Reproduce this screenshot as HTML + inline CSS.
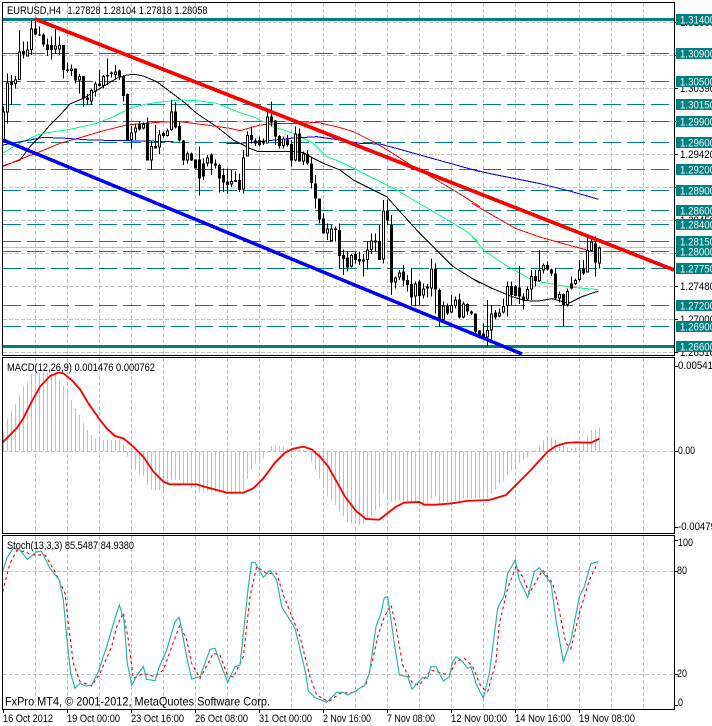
<!DOCTYPE html>
<html><head><meta charset="utf-8"><style>
html,body{margin:0;padding:0;background:#fff;width:712px;height:726px;overflow:hidden}
svg{display:block}
text{font-family:"Liberation Sans",sans-serif;font-size:10.6px;fill:#000}
.t{fill:#f6f6f6}
.w{fill:none;stroke:#000;stroke-width:3;shape-rendering:crispEdges}
.b{fill:none;stroke:#000;stroke-width:9;shape-rendering:crispEdges}
.i{fill:none;stroke:#fff;stroke-width:3;shape-rendering:crispEdges}
.k{fill:none;stroke:#000;stroke-width:3;shape-rendering:crispEdges}
.g{fill:none;stroke:#00ff7f;stroke-width:3;shape-rendering:crispEdges}
.r{fill:none;stroke:#f00;stroke-width:3;shape-rendering:crispEdges}
.u{fill:none;stroke:#00f;stroke-width:3;shape-rendering:crispEdges}
.s{fill:none;stroke:#20b2aa;stroke-width:3.4}
.d{fill:none;stroke:#f00;stroke-width:3.4;stroke-dasharray:9 9}
.m{fill:none;stroke:#f00;stroke-width:5.6}
</style></head><body>
<svg width="712" height="726" viewBox="0 0 712 726" xmlns="http://www.w3.org/2000/svg">
<rect width="712" height="726" fill="#fff"/>
<!-- vertical grid -->
<path shape-rendering="crispEdges" fill="none" stroke="#c0c0c0" stroke-dasharray="4 2" d="M35.5 3V355M67.5 3V355M99.5 3V355M131.5 3V355M163.5 3V355M195.5 3V355M227.5 3V355M259.5 3V355M291.5 3V355M323.5 3V355M355.5 3V355M387.5 3V355M419.5 3V355M451.5 3V355M483.5 3V355M515.5 3V355M547.5 3V355M579.5 3V355M611.5 3V355M643.5 3V355M35.5 358V533M67.5 358V533M99.5 358V533M131.5 358V533M163.5 358V533M195.5 358V533M227.5 358V533M259.5 358V533M291.5 358V533M323.5 358V533M355.5 358V533M387.5 358V533M419.5 358V533M451.5 358V533M483.5 358V533M515.5 358V533M547.5 358V533M579.5 358V533M611.5 358V533M643.5 358V533M35.5 536V709M67.5 536V709M99.5 536V709M131.5 536V709M163.5 536V709M195.5 536V709M227.5 536V709M259.5 536V709M291.5 536V709M323.5 536V709M355.5 536V709M387.5 536V709M419.5 536V709M451.5 536V709M483.5 536V709M515.5 536V709M547.5 536V709M579.5 536V709M611.5 536V709M643.5 536V709"/>
<!-- horizontal grid -->
<path shape-rendering="crispEdges" fill="none" stroke="#c0c0c0" stroke-dasharray="4 2" d="M3 22.5H674M3 55.5H674M3 88.5H674M3 121.5H674M3 154.5H674M3 187.5H674M3 220.5H674M3 253.5H674M3 286.5H674M3 319.5H674M3 352.5H674M3 451.5H674M3 571.5H674M3 674.5H674"/>
<!-- price line -->
<path shape-rendering="crispEdges" stroke="#c0c0c0" d="M3 247.5H674"/>
<!-- teal levels -->
<path shape-rendering="crispEdges" fill="none" stroke="#008080" stroke-dasharray="18 6" d="M3 53.5H674M3 81.5H674M3 104.5H674M3 121.5H674M3 142.5H674M3 169.5H674M3 190.5H674M3 210.5H674M3 224.5H674M3 241.5H674M3 251.5H674M3 268.5H674M3 305.5H674M3 326.5H674"/>
<rect x="3" y="18" width="671" height="3" fill="#008080"/>
<rect x="3" y="345" width="671" height="3" fill="#008080"/>
<!-- moving averages -->
<g transform="scale(.33333)">
<path class="k" d="M8 498L60 480L90 440L120 410L150 375L180 345L210 312L250 295L300 265L350 235L380 225L405 223L430 228L470 245L510 275L550 305L590 340L650 380L700 420L720 430"/>
<path class="g" d="M8 460L40 440L80 420L110 405L160 395L210 388L290 370L340 350L390 325L440 312L490 305L540 300L590 302L650 310L700 330L720 338"/>
<path class="r" d="M8 500L60 478L120 455L180 430L250 410L300 395L380 375L470 367L540 365L620 375L690 385L720 392"/>
<path class="u" d="M8 435L90 420L130 412L200 415L270 420L380 422L520 425M680 430L720 430"/>
</g>
<g transform="translate(240 0) scale(.33333)">
<path class="k" d="M0 430L30 445L55 455L165 455L190 458L220 475L250 490L300 510L340 540"/>
<path class="g" d="M0 338L40 350L100 380L160 400L220 430L260 470L300 485L350 510L410 540"/>
<path class="r" d="M0 392L60 375L120 370L180 370L230 367L290 380L340 395L400 425L450 455L520 500L590 540"/>
<path class="u" d="M0 430L60 425L150 415L230 410L300 420L360 430L420 432L480 448L540 465L630 490L720 515"/>
</g>
<g transform="translate(240 180) scale(.33333)">
<path class="k" d="M340 0L400 30L440 50L480 95L530 150L580 200L640 260L720 310"/>
<path class="g" d="M410 0L470 30L520 60L580 95L640 130L680 155L715 185"/>
<path class="r" d="M590 0L640 30L720 80"/>
</g>
<g transform="translate(472 0) scale(.33333)"><path class="u" d="M0 508L50 520L150 540"/></g>
<g transform="translate(472 180) scale(.33333)">
<path class="k" d="M0 295L60 325L120 350L160 362L200 363L240 356L290 370L330 350L380 333"/>
<path class="g" d="M0 170L40 215L100 255L170 295L200 305L245 313L300 322L380 329"/>
<path class="r" d="M0 70L60 105L130 145L200 170L270 190L345 210"/>
<path class="u" d="M150 0L200 10L300 35L380 58"/>
</g>
<!-- candles -->
<g transform="scale(.33333)">
<path class="w" d="M10.5 320V420M22.5 220V370M34.5 225V315M46.5 228V265M58.5 90V240M70.5 125V175M82.5 125V170M94.5 60V165M106.5 55V105M118.5 80V108M130.5 100V140M142.5 115V168M154.5 110V178M166.5 85V162M178.5 110V165M190.5 135V235M202.5 188V218M214.5 193V228M226.5 205V250M238.5 222V280M250.5 228V320M262.5 282V315M274.5 265V315M286.5 245V290M298.5 210V260M310.5 225V265M322.5 175V255M334.5 215V232M346.5 195V235M358.5 208V240M370.5 225V305M382.5 280V422M394.5 378V445M406.5 370V420M418.5 365V392M430.5 368V388M442.5 352V482M454.5 425V510M466.5 375V445M478.5 390V462M490.5 395V412M502.5 385V410M514.5 300V392M526.5 308V385M538.5 365V425M550.5 420V495M562.5 455V490M574.5 458V483M586.5 478V505M598.5 440V587M610.5 475V540M622.5 465V500M634.5 460V525M646.5 478V505M658.5 490V578M670.5 505V576M682.5 505V582M694.5 510V561M706.5 515V546M718.5 520V576"/>
<path class="b" d="M10.5 335V420M22.5 248V338M34.5 245V255M46.5 238V252M58.5 155V240M70.5 153V163M82.5 148V170M94.5 85V150M106.5 85V103M118.5 103V106M130.5 103V133M142.5 133V150M154.5 135V150M166.5 137V148M178.5 135V148M190.5 135V210M202.5 208V213M214.5 205V213M226.5 205V242M238.5 228V242M250.5 228V295M262.5 292V300M274.5 270V305M286.5 250V275M298.5 250V258M310.5 228V258M322.5 225V230M334.5 218V222M346.5 215V225M358.5 212V230M370.5 228V288M382.5 282V422M394.5 398V420M406.5 382V398M418.5 372V388M430.5 372V386M442.5 368V482M454.5 438V482M466.5 438V445M478.5 403V442M490.5 399V408M502.5 392V408M514.5 335V390M526.5 335V382M538.5 378V422M550.5 422V482M562.5 460V482M574.5 461V482M586.5 478V505M598.5 478V535M610.5 490V530M622.5 472V490M634.5 463V490M646.5 490V497M658.5 495V535M670.5 525V548M682.5 545V555M694.5 543V554M706.5 540V546M718.5 540V570"/>
<path class="i" d="M10.5 338V417M22.5 251V335M46.5 241V249M58.5 158V237M82.5 151V167M94.5 88V147M166.5 140V145M178.5 138V145M214.5 208V210M238.5 231V239M274.5 273V302M286.5 253V272M310.5 231V255M346.5 218V222M394.5 401V417M406.5 385V395M430.5 375V383M454.5 441V479M478.5 406V439M502.5 395V405M514.5 338V387M562.5 463V479M622.5 475V487M694.5 546V551"/>
</g>
<g transform="translate(240 0) scale(.33333)">
<path class="w" d="M10.5 450V580M22.5 395V470M34.5 380V430M46.5 415V438M58.5 410V440M70.5 415V435M82.5 335V430M94.5 305V380M106.5 360V435M118.5 405V445M130.5 410V445M142.5 405V440M154.5 420V500M166.5 380V485M178.5 385V485M190.5 455V495M202.5 450V495"/>
<path class="b" d="M10.5 472V568M22.5 405V470M34.5 405V420M46.5 422V430M58.5 420V435M70.5 422V430M82.5 350V430M94.5 350V368M106.5 362V410M118.5 408V438M130.5 415V438M142.5 418V435M154.5 432V482M166.5 400V482M178.5 400V485M190.5 460V485M202.5 462V490"/>
<path class="i" d="M10.5 475V565M22.5 408V467M82.5 353V427M130.5 418V435M166.5 403V479M190.5 463V482"/>
</g>
<g transform="translate(240 180) scale(.33333)">
<path class="w" d="M214.5 -70V25M226.5 -15V85M238.5 55V130M250.5 100V160M262.5 130V180M274.5 135V185M286.5 140V185M298.5 130V265M310.5 208V285M322.5 215V275M334.5 222V262M346.5 215V250M358.5 215V255M370.5 222V290M382.5 185V268M394.5 160V222M406.5 160V215M418.5 135V225M430.5 60V250M442.5 58V135M454.5 105V345M466.5 290V325M478.5 270V300M490.5 255V320M502.5 285V335M514.5 265V375M526.5 305V380M538.5 300V375M550.5 310V355M562.5 312V353M574.5 235V350M586.5 250V400M598.5 325V440M610.5 365V420M622.5 370V405M634.5 345V400M646.5 350V385M658.5 340V415M670.5 365V415M682.5 370V405M694.5 392V405M706.5 400V460"/>
<path class="b" d="M214.5 -50V9M226.5 10V55M238.5 55V118M250.5 115V160M262.5 145V160M274.5 145V183M286.5 145V150M298.5 150V228M310.5 225V237M322.5 233V262M334.5 225V260M346.5 222V240M358.5 237V245M370.5 238V245M382.5 208V240M394.5 182V210M406.5 182V188M418.5 183V240M430.5 92V238M442.5 92V122M454.5 135V308M466.5 292V308M478.5 278V293M490.5 275V302M502.5 300V315M514.5 312V352M526.5 310V350M538.5 305V348M550.5 325V347M562.5 320V325M574.5 265V325M586.5 265V328M598.5 330V420M610.5 377V420M622.5 378V400M634.5 375V398M646.5 358V378M658.5 358V412M670.5 370V412M682.5 372V395M694.5 395V401M706.5 400V455"/>
<path class="i" d="M262.5 148V157M274.5 148V180M334.5 228V257M382.5 211V237M394.5 185V207M430.5 95V235M466.5 295V305M478.5 281V290M526.5 313V347M550.5 328V344M574.5 268V322M610.5 380V417M634.5 378V395M646.5 361V375M670.5 373V409"/>
</g>
<g transform="translate(472 180) scale(.33333)">
<path class="w" d="M22.5 450V468M34.5 430V480M46.5 360V500M58.5 375V480M70.5 390V418M82.5 385V412M94.5 355V400M106.5 305V410M118.5 305V375M130.5 315V350M142.5 258V372M154.5 340V388M166.5 320V360M178.5 270V360M190.5 270V320M202.5 210V305M214.5 250V280M226.5 245V272M238.5 265V288M250.5 265V360M262.5 335V368M274.5 340V438M286.5 325V380M298.5 290V328M310.5 295V315M322.5 240V305M334.5 240V285M346.5 172V278M358.5 178V215M370.5 170V290M382.5 200V265"/>
<path class="b" d="M22.5 452V465M34.5 460V470M46.5 450V472M58.5 400V452M70.5 398V412M82.5 397V410M94.5 378V398M106.5 318V378M118.5 318V345M130.5 320V348M142.5 323V350M154.5 350V360M166.5 327V358M178.5 288V328M190.5 288V303M202.5 270V303M214.5 255V272M226.5 255V268M238.5 268V280M250.5 280V355M262.5 342V355M274.5 342V375M286.5 333V375M298.5 310V325M310.5 300V312M322.5 268V300M334.5 265V280M346.5 210V278M358.5 185V213M370.5 190V248M382.5 203V250"/>
<path class="i" d="M46.5 453V469M58.5 403V449M82.5 400V407M94.5 381V395M106.5 321V375M166.5 330V355M178.5 291V325M202.5 273V300M214.5 258V269M262.5 345V352M286.5 336V372M310.5 303V309M322.5 271V297M346.5 213V275M358.5 188V210M382.5 206V247"/>
</g>
<!-- trend lines -->
<path shape-rendering="crispEdges" fill="none" stroke="#f00" stroke-width="3.7" d="M35 19L674 270"/>
<path shape-rendering="crispEdges" fill="none" stroke="#00f" stroke-width="3.5" d="M3 140L522 354"/>
<!-- MACD histogram -->
<g transform="translate(0 350) scale(.33333)">
<path fill="none" stroke="#c0c0c0" stroke-width="3" shape-rendering="crispEdges" d="M10.5 304V243M22.5 304V207M34.5 304V182M46.5 304V162M58.5 304V135M70.5 304V110M82.5 304V97M94.5 304V72M106.5 304V72M118.5 304V70M130.5 304V68M142.5 304V68M154.5 304V70M166.5 304V72M178.5 304V90M190.5 304V108M202.5 304V125M214.5 304V150M226.5 304V175M238.5 304V195M250.5 304V218M262.5 304V240M274.5 304V255M286.5 304V265M298.5 304V270M310.5 304V270M322.5 304V270M334.5 304V270M346.5 304V270M358.5 304V270M370.5 304V285M382.5 304V320M394.5 304V350M406.5 304V360M418.5 304V370M430.5 304V378M442.5 304V405M454.5 304V418M466.5 304V422M478.5 304V420M490.5 304V420M502.5 304V405M514.5 304V390M526.5 304V388M538.5 304V390M550.5 304V405M562.5 304V405M574.5 304V415M586.5 304V415M598.5 304V428M610.5 304V428M622.5 304V425M634.5 304V425M646.5 304V425M658.5 304V428M670.5 304V425M682.5 304V432M694.5 304V432M706.5 304V430M718.5 304V428M730.5 304V420M742.5 304V385M754.5 304V360M766.5 304V340M778.5 304V335M790.5 304V325M802.5 304V307M814.5 304V288M826.5 304V285M838.5 304V288M850.5 304V290M862.5 304V295M874.5 304V300M886.5 304V298M898.5 304V298M910.5 304V298M922.5 304V305M934.5 304V335M946.5 304V360M958.5 304V385M970.5 304V410M982.5 304V440M994.5 304V450M1006.5 304V465M1018.5 304V485M1030.5 304V500M1042.5 304V518M1054.5 304V520M1066.5 304V508"/>
<path class="m" d="M8 277L50 235L70 205L95 155L120 110L150 78L175 68L190 70L215 90L240 118L265 160L300 210L320 235L345 258L370 265L400 290L430 320L460 365L490 395L510 403L590 403L620 412L680 428L730 428L760 415L790 385L825 338L855 308L880 296L910 290L935 298L960 320L985 350L1010 395L1035 440L1068 483"/>
</g>
<g transform="translate(356 350) scale(.33333)">
<path fill="none" stroke="#c0c0c0" stroke-width="3" shape-rendering="crispEdges" d="M10.5 304V525M22.5 304V522M34.5 304V510M46.5 304V500M58.5 304V480M70.5 304V470M82.5 304V430M94.5 304V445M106.5 304V455M118.5 304V455M130.5 304V450M142.5 304V460M154.5 304V455M166.5 304V455M178.5 304V455M190.5 304V465M202.5 304V470M214.5 304V460M226.5 304V445M238.5 304V440M250.5 304V462M262.5 304V458M274.5 304V458M286.5 304V460M298.5 304V452M310.5 304V455M322.5 304V445M334.5 304V445M346.5 304V445M358.5 304V445M370.5 304V445M382.5 304V435M394.5 304V445M406.5 304V430M418.5 304V418M430.5 304V400M442.5 304V395M454.5 304V375M466.5 304V360M478.5 304V352M490.5 304V338M502.5 304V330M514.5 304V322M526.5 304V303M538.5 304V300M550.5 304V285M562.5 304V272M574.5 304V268M586.5 304V262M598.5 304V270M610.5 304V278M622.5 304V288M634.5 304V292M646.5 304V295M658.5 304V293M670.5 304V290M682.5 304V278M694.5 304V258M706.5 304V240M718.5 304V240M730.5 304V232"/>
<path class="m" d="M0 483L30 507L70 509L120 470L145 458L190 456L205 464L240 464L290 460L330 453L400 450L450 435L480 405L520 365L575 305L600 288L630 279L660 277L705 278L730 266"/>
</g>
<!-- Stochastic -->
<g transform="translate(0 530) scale(.33333)">
<path class="d" d="M8 185L30 100L50 62L75 65L95 75L135 75L165 125L195 190L205 280L220 400L240 455L275 468L300 430L335 350L350 290L370 248L385 330L400 445L430 430L465 440L490 420L530 310L540 285L560 330L575 400L600 445L640 370L660 375L680 430L700 442L730 380L750 200L770 110L800 130L830 130L850 195L900 320L930 440L950 495L985 515L1020 490L1068 487"/>
<path class="s" d="M8 125L20 85L40 55L60 60L82 88L110 65L125 65L150 115L178 150L190 210L200 320L212 430L225 475L240 460L258 468L275 465L295 425L320 350L345 265L358 225L372 270L382 400L395 465L415 430L430 410L440 448L465 452L478 410L500 360L525 275L538 262L560 380L575 447L600 440L630 358L645 355L665 410L683 457L705 410L720 405L745 170L755 97L765 97L790 142L810 120L830 150L845 230L885 295L915 420L925 483L945 503L980 517L1010 487L1030 487L1042 495L1068 483"/>
</g>
<g transform="translate(356 530) scale(.33333)">
<path class="d" d="M0 483L30 462L50 390L65 320L85 260L105 225L120 290L140 405L170 460L190 465L225 420L260 430L280 435L300 395L325 385L350 410L375 470L395 485L420 395L430 280L455 175L480 110L500 140L520 190L560 120L590 160L605 220L630 340L645 355L670 250L700 150L725 100"/>
<path class="s" d="M0 483L15 472L25 468L40 430L60 290L75 250L85 203L95 200L115 340L130 435L155 440L168 478L200 442L215 445L225 410L240 410L262 453L280 440L290 395L300 380L315 390L335 415L345 410L360 460L382 505L400 430L425 235L445 195L455 130L478 90L490 150L515 202L535 125L550 113L585 160L600 270L622 395L645 330L670 200L685 170L705 100L728 95"/>
</g>
<!-- borders -->
<path shape-rendering="crispEdges" fill="none" stroke="#000" d="M2.5 2.5H674.5V355.5H2.5ZM2.5 357.5H674.5V533.5H2.5ZM2.5 535.5H674.5V709.5H2.5Z"/>
<!-- ticks -->
<path shape-rendering="crispEdges" fill="none" stroke="#000" d="M675 22.5h3M675 55.5h3M675 88.5h3M675 121.5h3M675 154.5h3M675 187.5h3M675 220.5h3M675 253.5h3M675 286.5h3M675 319.5h3M675 352.5h3M675 366.5h3M675 451.5h3M675 527.5h3M675 540.5h3M675 571.5h3M675 674.5h3M675 705.5h3M3.5 710v3M67.5 710v3M131.5 710v3M195.5 710v3M259.5 710v3M323.5 710v3M387.5 710v3M451.5 710v3M515.5 710v3M579.5 710v3"/>
<!-- plain axis labels -->
<text x="680" y="26" textLength="35" lengthAdjust="spacingAndGlyphs">1.31360</text>
<text x="680" y="59" textLength="35" lengthAdjust="spacingAndGlyphs">1.30875</text>
<text x="680" y="92" textLength="35" lengthAdjust="spacingAndGlyphs">1.30390</text>
<text x="680" y="158" textLength="35" lengthAdjust="spacingAndGlyphs">1.29420</text>
<text x="680" y="224" textLength="35" lengthAdjust="spacingAndGlyphs">1.28450</text>
<text x="680" y="290" textLength="35" lengthAdjust="spacingAndGlyphs">1.27480</text>
<text x="680" y="323" textLength="35" lengthAdjust="spacingAndGlyphs">1.27000</text>
<text x="680" y="356" textLength="35" lengthAdjust="spacingAndGlyphs">1.26510</text>
<!-- teal boxes -->
<path fill="#008080" d="M676 14h36v11h-36zM676 48h36v11h-36zM676 76h36v11h-36zM676 99h36v11h-36zM676 116h36v11h-36zM676 137h36v11h-36zM676 164h36v11h-36zM676 185h36v11h-36zM676 205h36v11h-36zM676 219h36v11h-36zM676 236h36v11h-36zM676 246h36v11h-36zM676 263h36v11h-36zM676 300h36v11h-36zM676 321h36v11h-36zM676 341h36v11h-36z"/>
<text class="t" x="680" y="23.5" textLength="35" lengthAdjust="spacingAndGlyphs">1.31400</text>
<text class="t" x="680" y="57.5" textLength="35" lengthAdjust="spacingAndGlyphs">1.30900</text>
<text class="t" x="680" y="85.5" textLength="35" lengthAdjust="spacingAndGlyphs">1.30500</text>
<text class="t" x="680" y="108.5" textLength="35" lengthAdjust="spacingAndGlyphs">1.30150</text>
<text class="t" x="680" y="125.5" textLength="35" lengthAdjust="spacingAndGlyphs">1.29900</text>
<text class="t" x="680" y="146.5" textLength="35" lengthAdjust="spacingAndGlyphs">1.29600</text>
<text class="t" x="680" y="173.5" textLength="35" lengthAdjust="spacingAndGlyphs">1.29200</text>
<text class="t" x="680" y="194.5" textLength="35" lengthAdjust="spacingAndGlyphs">1.28900</text>
<text class="t" x="680" y="214.5" textLength="35" lengthAdjust="spacingAndGlyphs">1.28600</text>
<text class="t" x="680" y="228.5" textLength="35" lengthAdjust="spacingAndGlyphs">1.28400</text>
<text class="t" x="680" y="245.5" textLength="35" lengthAdjust="spacingAndGlyphs">1.28150</text>
<text class="t" x="680" y="255.5" textLength="35" lengthAdjust="spacingAndGlyphs">1.28000</text>
<text class="t" x="680" y="272.5" textLength="35" lengthAdjust="spacingAndGlyphs">1.27750</text>
<text class="t" x="680" y="309.5" textLength="35" lengthAdjust="spacingAndGlyphs">1.27200</text>
<text class="t" x="680" y="330.5" textLength="35" lengthAdjust="spacingAndGlyphs">1.26900</text>
<text class="t" x="680" y="350.5" textLength="35" lengthAdjust="spacingAndGlyphs">1.26600</text>
<!-- indicator axis -->
<text x="678" y="369" textLength="35" lengthAdjust="spacingAndGlyphs">0.00541</text>
<text x="678" y="454" textLength="17" lengthAdjust="spacingAndGlyphs">0.00</text>
<text x="678" y="530" textLength="38" lengthAdjust="spacingAndGlyphs">-0.00479</text>
<text x="678" y="546" textLength="15" lengthAdjust="spacingAndGlyphs">100</text>
<text x="677" y="574" textLength="10" lengthAdjust="spacingAndGlyphs">80</text>
<text x="677" y="677" textLength="10" lengthAdjust="spacingAndGlyphs">20</text>
<text x="678" y="706" textLength="5" lengthAdjust="spacingAndGlyphs">0</text>
<!-- captions -->
<text x="7" y="14" textLength="54" lengthAdjust="spacingAndGlyphs">EURUSD,H4</text>
<text x="67.5" y="14" textLength="140" lengthAdjust="spacingAndGlyphs">1.27828 1.28104 1.27818 1.28058</text>
<text x="7" y="371" textLength="148" lengthAdjust="spacingAndGlyphs">MACD(12,26,9) 0.001476 0.000762</text>
<text x="7" y="549" textLength="127" lengthAdjust="spacingAndGlyphs">Stoch(13,3,3) 85.5487 84.9380</text>
<text x="5" y="705.5" textLength="265" lengthAdjust="spacingAndGlyphs" style="font-size:12px">FxPro MT4, © 2001-2012, MetaQuotes Software Corp.</text>
<!-- time axis -->
<text x="3" y="722" textLength="50" lengthAdjust="spacingAndGlyphs">16 Oct 2012</text>
<text x="67" y="722" textLength="53" lengthAdjust="spacingAndGlyphs">19 Oct 00:00</text>
<text x="131" y="722" textLength="53" lengthAdjust="spacingAndGlyphs">23 Oct 16:00</text>
<text x="195" y="722" textLength="53" lengthAdjust="spacingAndGlyphs">26 Oct 08:00</text>
<text x="259" y="722" textLength="53" lengthAdjust="spacingAndGlyphs">31 Oct 00:00</text>
<text x="323" y="722" textLength="48" lengthAdjust="spacingAndGlyphs">2 Nov 16:00</text>
<text x="387" y="722" textLength="48" lengthAdjust="spacingAndGlyphs">7 Nov 08:00</text>
<text x="451" y="722" textLength="56" lengthAdjust="spacingAndGlyphs">12 Nov 00:00</text>
<text x="515" y="722" textLength="56" lengthAdjust="spacingAndGlyphs">14 Nov 16:00</text>
<text x="579" y="722" textLength="56" lengthAdjust="spacingAndGlyphs">19 Nov 08:00</text>
</svg>
</body></html>
